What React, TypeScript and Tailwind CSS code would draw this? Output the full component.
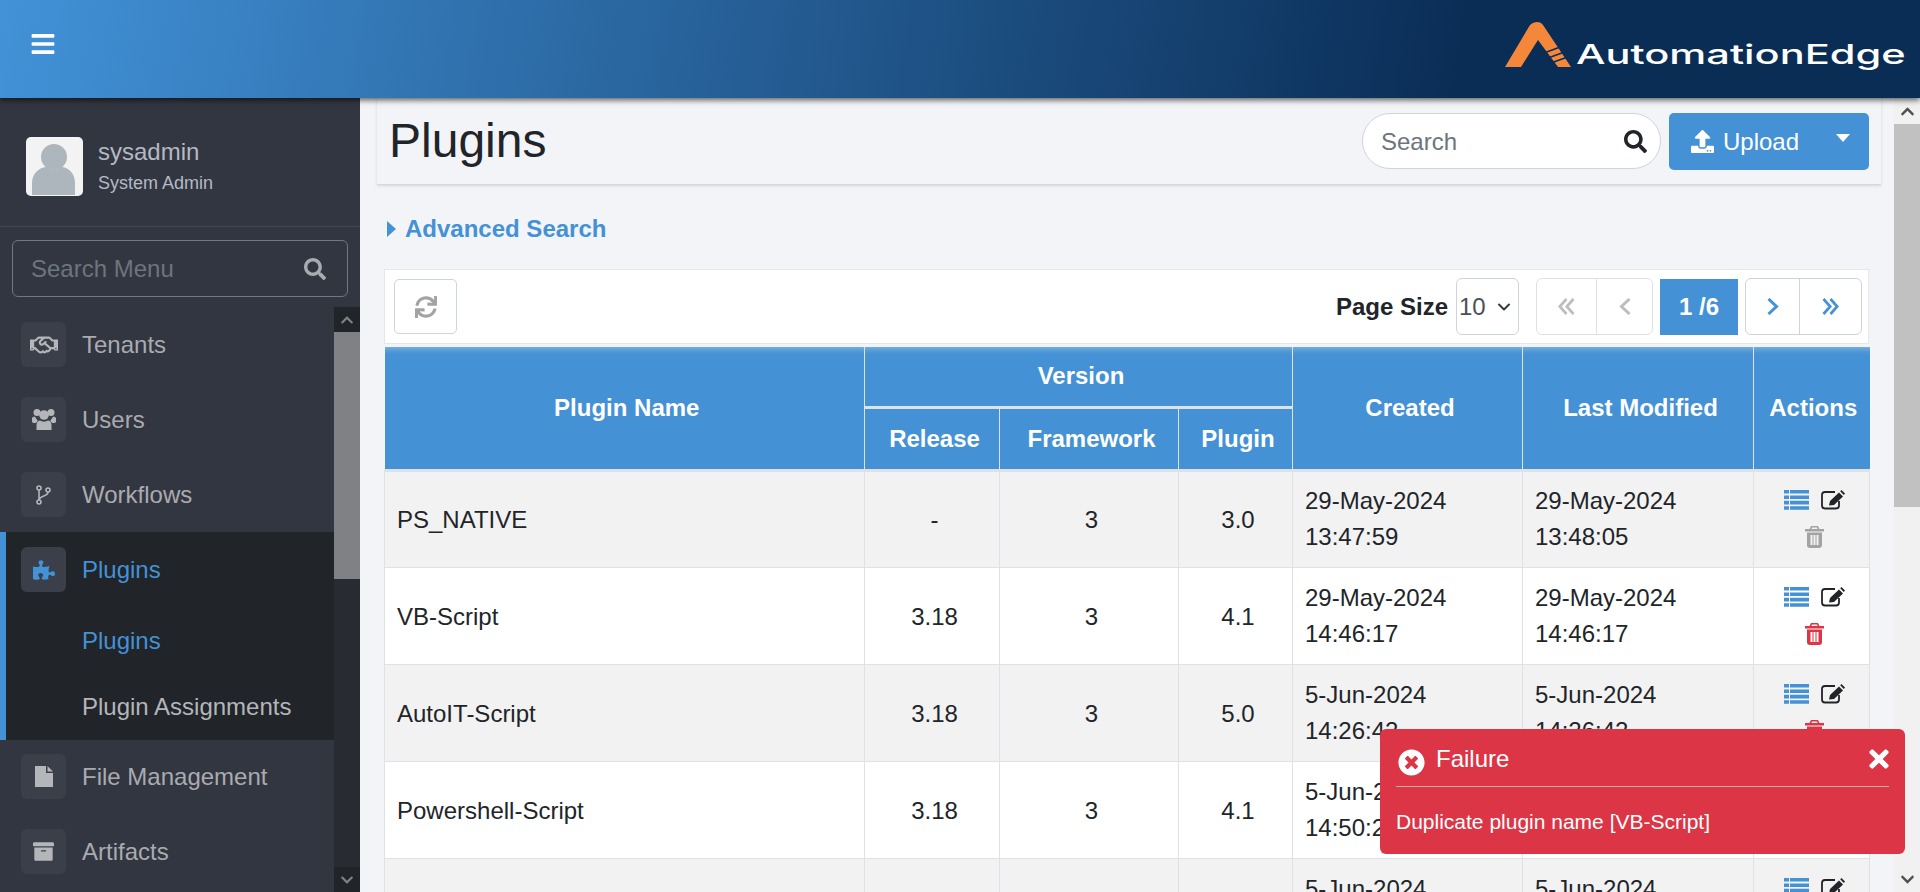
import React from "react";
import {
  FaArchive,
  FaBars,
  FaChevronDown,
  FaChevronUp,
  FaPuzzlePiece,
  FaRegHandshake,
  FaSearch,
  FaSync,
  FaTimes,
  FaTimesCircle,
  FaUpload,
} from "react-icons/fa";

const rows = [
  { name: "PS_NATIVE", release: "-", framework: "3", plugin: "3.0", created: ["29-May-2024", "13:47:59"], modified: ["29-May-2024", "13:48:05"], locked: true },
  { name: "VB-Script", release: "3.18", framework: "3", plugin: "4.1", created: ["29-May-2024", "14:46:17"], modified: ["29-May-2024", "14:46:17"] },
  { name: "AutoIT-Script", release: "3.18", framework: "3", plugin: "5.0", created: ["5-Jun-2024", "14:26:42"], modified: ["5-Jun-2024", "14:26:42"] },
  { name: "Powershell-Script", release: "3.18", framework: "3", plugin: "4.1", created: ["5-Jun-2024", "14:50:21"], modified: ["5-Jun-2024", "14:50:21"] },
  { name: "Python-Script", release: "3.18", framework: "3", plugin: "4.1", created: ["5-Jun-2024", "15:02:10"], modified: ["5-Jun-2024", "15:02:10"] },
];

// the app uses the old font-awesome set, these are closer than the packaged ones
function ListIcon() {
  return (
    <svg viewBox="0 0 25 20" className="h-[20px] w-[25px]" fill="#4491d5">
      <path d="M0 0h5v3.6H0zM6 0h19v3.6H6zM0 5.4h5V9H0zM6 5.4h19V9H6zM0 10.8h5v3.6H0zM6 10.8h19v3.6H6zM0 16.2h5v3.6H0zM6 16.2h19v3.6H6z" />
    </svg>
  );
}

function EditIcon() {
  return (
    <svg viewBox="0 0 24 20" className="h-[20px] w-[24px]" fill="#212529">
      <path d="M14 2H4A3 3 0 0 0 1 5v10.500a3 3 0 0 0 3 3h11a3 3 0 0 0 3-3V11" fill="none" stroke="#212529" strokeWidth="1.800" />
      <path d="M8 15.500L9 11 18 2.500 22 6.500 13 15zM19.200 1.300L20.500 0 24 3.500 22.800 5z" />
    </svg>
  );
}

function TrashIcon({ color }: { color: string }) {
  return (
    <svg viewBox="0 0 19 22" className="h-[22px] w-[19px]" fill={color}>
      <path d="M6 0h7l1.500 3H19v2.400H0V3h4.500zM7 1.500L6.400 3h6.200L12 1.500z" />
      <path d="M2 6.500h15V19a3 3 0 0 1-3 3H5a3 3 0 0 1-3-3zM5.500 9v10H7.500V9zM8.500 9v10h2V9zM11.500 9v10h2V9z" fillRule="evenodd" />
    </svg>
  );
}

function DoubleAngle({ flip }: { flip?: boolean }) {
  return (
    <svg viewBox="0 0 17 17" className={`h-[17px] w-[17px] ${flip ? "rotate-180" : ""}`} fill="none" stroke="currentColor" strokeWidth="2.700">
      <path d="M8.500 1L1.800 8.500 8.500 16M15.500 1L8.800 8.500 15.500 16" />
    </svg>
  );
}

function SingleAngle({ flip }: { flip?: boolean }) {
  return (
    <svg viewBox="0 0 12 17" className={`h-[17px] w-[12px] ${flip ? "rotate-180" : ""}`} fill="none" stroke="currentColor" strokeWidth="3">
      <path d="M10.500 1L2.500 8.500 10.500 16" />
    </svg>
  );
}

function ForkIcon() {
  return (
    <svg viewBox="0 0 15 20" className="h-[20px] w-[15px]" fill="none" stroke="currentColor" strokeWidth="1.600">
      <circle cx="3" cy="3" r="2" />
      <circle cx="3" cy="17" r="2" />
      <circle cx="12" cy="5" r="2" />
      <path d="M3 5v10M12 7c0 5-8 3-9 8" />
    </svg>
  );
}

function UsersIcon() {
  return (
    <svg viewBox="0 0 24 21" className="h-[21px] w-[24px]" fill="currentColor">
      <circle cx="5" cy="3.500" r="3.500" />
      <circle cx="19" cy="3.500" r="3.500" />
      <circle cx="12" cy="6" r="4.800" />
      <path d="M0 9.500C0 8 1.500 7.500 3 7.800L5.800 12 4 14H1.500C.5 14 0 13 0 12zM24 9.500C24 8 22.500 7.500 21 7.800L18.200 12 20 14h2.500c1 0 1.500-1 1.500-2z" />
      <path d="M4.500 21V16c0-2.500 2-4.500 3.500-4.500 2.200 1.500 5.800 1.500 8 0 1.500 0 3.500 2 3.500 4.500v5z" />
    </svg>
  );
}

function FileIcon() {
  return (
    <svg viewBox="0 0 18 21" className="h-[21px] w-[18px]" fill="currentColor">
      <path d="M0 0h11v7h7v14H0zM12.500 0L18 5.500h-5.500z" />
    </svg>
  );
}

function MenuItem({ icon, label, active }: { icon: React.ReactNode; label: string; active?: boolean }) {
  return (
    <div className="flex h-[75px] items-center gap-4">
      <div className={`flex h-[45px] w-[45px] items-center justify-center rounded-md bg-[#3b3f49] ${active ? "text-[#4491d5]" : "text-[#b4b6ba]"}`}>
        {icon}
      </div>
      <span className={active ? "text-[#4491d5]" : "text-[#a9abb0]"}>{label}</span>
    </div>
  );
}

function Sidebar() {
  return (
    <aside className="flex w-[360px] shrink-0 flex-col bg-[#323640]">
      <div className="flex h-[129px] shrink-0 items-center gap-[15px] border-b border-[#41454e] pl-[26px] pt-[8px]">
        <svg viewBox="0 0 57 59" className="h-[59px] w-[57px]">
          <rect width="57" height="59" rx="5" fill="#f3f3f3" />
          <circle cx="28" cy="20" r="13" fill="#adb5bd" />
          <path d="M6 58 V46 C6 36 14 30 21 30 C25 34 31 34 35 30 C42 30 49 36 49 46 V58 Z" fill="#adb5bd" />
        </svg>
        <div>
          <div className="text-[24px] leading-[30px] text-[#b4b9c4]">sysadmin</div>
          <div className="mt-[4px] text-[18px] leading-[24px] text-[#b4b9c4]">System Admin</div>
        </div>
      </div>
      <div className="mx-3 mt-[13px] flex h-[57px] w-[336px] shrink-0 items-center justify-between rounded-md border border-[#73767e] pl-[18px] pr-[21px]">
        <span className="text-[24px] text-[#6c757d]">Search Menu</span>
        <FaSearch className="text-[22px] text-[#a9abb0]" />
      </div>
      <div className="mt-[10px] flex min-h-0 flex-1 overflow-hidden text-[24px]">
        <nav className="w-[334px] shrink-0">
          <div className="pl-[21px]">
            <MenuItem icon={<FaRegHandshake className="text-[28px]" />} label="Tenants" />
            <MenuItem icon={<UsersIcon />} label="Users" />
            <MenuItem icon={<ForkIcon />} label="Workflows" />
          </div>
          <div className="mt-[1px] border-l-[6px] border-[#4491d5] bg-[#212429] pl-[15px]">
            <div className="-mt-[1px]">
              <MenuItem icon={<FaPuzzlePiece className="text-[22px]" />} label="Plugins" active />
            </div>
            <div className="pl-[61px] pt-[1px]">
              <div className="flex h-[66px] items-center text-[#4491d5]">Plugins</div>
              <div className="flex h-[66px] items-center text-[#b4b6ba]">Plugin Assignments</div>
            </div>
          </div>
          <div className="-mt-[1px] pl-[21px]">
            <MenuItem icon={<FileIcon />} label="File Management" />
            <MenuItem icon={<FaArchive className="text-[21px]" />} label="Artifacts" />
          </div>
        </nav>
        <div className="flex w-[26px] shrink-0 flex-col bg-[#282b32]">
          <div className="flex h-[25px] items-center justify-center bg-[#212429] text-[14px] text-[#7f8185]">
            <FaChevronUp />
          </div>
          <div className="h-[247px] bg-[#808185]" />
          <div className="flex-1" />
          <div className="flex h-[25px] items-center justify-center bg-[#212429] text-[14px] text-[#7f8185]">
            <FaChevronDown />
          </div>
        </div>
      </div>
    </aside>
  );
}

function PlainButton({ children, className }: { children: React.ReactNode; className: string }) {
  return <div className={`flex h-[55px] items-center justify-center text-[24px] ${className}`}>{children}</div>;
}

function Toolbar() {
  return (
    <div className="flex h-[75px] items-center justify-between border border-[#e4e6ea] bg-white pl-[9px] pr-[6px]">
      <PlainButton className="w-[63px] rounded-[5px] border border-[#ced4da] text-[#a3a3a3]">
        <FaSync className="text-[22px]" />
      </PlainButton>
      <div className="flex items-center">
        <span className="mr-[8px] text-[24px] font-bold text-[#212529]">Page Size</span>
        <div className="mr-[17px] flex h-[57px] w-[63px] items-center justify-between rounded-md border border-[#ced4da] pl-[2px] pr-[6px] text-[24px] text-[#495057]">
          10
          <svg viewBox="0 0 16 16" className="h-[16px] w-[16px]" fill="none" stroke="#343a40" strokeWidth="2" strokeLinecap="round" strokeLinejoin="round">
            <path d="M3 5.500l5 5 5-5" />
          </svg>
        </div>
        <div className="flex rounded-md border border-[#dee2e6] text-[#bdbdbd]">
          <PlainButton className="w-[60px] border-r border-[#dee2e6]"><DoubleAngle /></PlainButton>
          <PlainButton className="w-[55px]"><SingleAngle /></PlainButton>
        </div>
        <div className="mx-[7px] flex h-[56px] w-[78px] items-center justify-center bg-[#4491d5] text-[24px] font-bold text-white">1 /6</div>
        <div className="flex rounded-md border border-[#ced4da] text-[#4491d5]">
          <PlainButton className="w-[54px] border-r border-[#ced4da]"><SingleAngle flip /></PlainButton>
          <PlainButton className="w-[61px]"><DoubleAngle flip /></PlainButton>
        </div>
      </div>
    </div>
  );
}

function PluginTable() {
  const th = "border-r border-[#dee2e6] pl-[5px] text-center align-middle font-bold text-white shadow-[inset_0_7px_6px_-5px_rgba(255,255,255,0.35)]";
  const sub = "border-r border-[#dee2e6] pl-[5px] font-bold text-white";
  const td = "border-r border-[#dee2e6] px-3 py-0 text-[#212529]";
  const center = "border-r border-[#dee2e6] pl-[5px] pt-[2px] text-center text-[#212529]";
  return (
    <table className="mt-[3px] w-[1485px] table-fixed border-collapse text-[24px] leading-[36px]">
      <colgroup>
        <col className="w-[480px]" />
        <col className="w-[135px]" />
        <col className="w-[179px]" />
        <col className="w-[114px]" />
        <col className="w-[230px]" />
        <col className="w-[231px]" />
        <col className="w-[116px]" />
      </colgroup>
      <thead className="bg-[#4491d5]">
        <tr className="h-[60px]">
          <th rowSpan={2} className={th}>Plugin Name</th>
          <th colSpan={3} className={`${th} border-b-[3px]`}>Version</th>
          <th rowSpan={2} className={th}>Created</th>
          <th rowSpan={2} className={th}>Last Modified</th>
          <th rowSpan={2} className="pl-[3px] text-center align-middle font-bold text-white shadow-[inset_0_7px_6px_-5px_rgba(255,255,255,0.35)]">Actions</th>
        </tr>
        <tr className="h-[63px] border-b-[3px] border-[#dee2e6]">
          <th className={sub}>Release</th>
          <th className={sub}>Framework</th>
          <th className={sub}>Plugin</th>
        </tr>
      </thead>
      <tbody>
        {rows.map((row, i) => (
          <tr key={row.name} className={`h-[97px] border-b border-[#dee2e6] ${i % 2 === 0 ? "bg-[#f2f2f2]" : "bg-white"}`}>
            <td className={`${td} border-l pt-[2px]`}>{row.name}</td>
            <td className={center}>{row.release}</td>
            <td className={center}>{row.framework}</td>
            <td className={center}>{row.plugin}</td>
            <td className={td}>{row.created[0]}<br />{row.created[1]}</td>
            <td className={td}>{row.modified[0]}<br />{row.modified[1]}</td>
            <td className="border-r border-[#dee2e6] pl-[5px]">
              <div className="flex items-center justify-center gap-[12px]">
                <ListIcon />
                <EditIcon />
              </div>
              <div className="mt-[16px] flex justify-center">
                <TrashIcon color={row.locked ? "#a3a3a3" : "#dc3545"} />
              </div>
            </td>
          </tr>
        ))}
      </tbody>
    </table>
  );
}

export default function App() {
  return (
    <div className="relative flex h-[892px] w-full flex-col overflow-hidden bg-[#f2f4f8] font-['Liberation_Sans',Arial,sans-serif]">
      <header className="relative z-10 flex h-[98px] shrink-0 items-center justify-between bg-[linear-gradient(100deg,#4292d8_0%,#0a2d56_76%)] pl-[30px] pr-[15px] shadow-[0_2px_6px_rgba(0,0,0,0.65)]">
        <FaBars className="-mt-[10px] text-[26px] text-white" />
        <div className="-mt-[10px] flex items-end">
          <svg viewBox="0 0 66 45" className="h-[45px] w-[66px]">
            <path d="M0 45 L25 3 Q28 0 32 0 Q36 0 38 3 L66 45 H53 L33 18 L16 45 Z" fill="#f5873a" />
            <path d="M39 31 L58 24 M43 36 L61 29.500 M46 41 L64 34.500" stroke="#0a2d56" strokeWidth="1.700" />
          </svg>
          <div className="w-[334px]">
            <span className="ml-[5px] inline-block origin-left translate-y-[5px] scale-x-[1.54] font-['Inter',sans-serif] text-[27px] font-medium leading-[34px] text-white">AutomationEdge</span>
          </div>
        </div>
      </header>

      <div className="flex min-h-0 flex-1">
        <Sidebar />
        <main className="min-w-0 flex-1 overflow-hidden pl-[17px] pr-[13px]">
          <div className="flex h-[87px] items-center justify-between border-b border-[#d5d8de] pl-3 pr-3 shadow-[0_1px_3px_rgba(0,0,0,0.12)]">
            <h1 className="text-[48px] leading-[58px] text-[#212529]">Plugins</h1>
            <div className="flex items-center gap-[8px]">
              <div className="flex h-[56px] w-[299px] items-center justify-between rounded-full border border-[#ced4da] bg-white pl-[18px] pr-[13px]">
                <span className="pt-[2px] text-[24px] text-[#6c757d]">Search</span>
                <FaSearch className="text-[23px] text-[#212529]" />
              </div>
              <div className="flex h-[57px] w-[200px] items-center rounded-[5px] bg-[#4491d5] pl-[22px] text-[24px] text-white">
                <FaUpload className="mr-[9px] text-[23px]" />
                <span className="pt-[2px]">Upload</span>
                <svg viewBox="0 0 14 8" className="ml-[37px] mt-[-6px] h-[8px] w-[14px]" fill="currentColor">
                  <path d="M0 0h14L7 8z" />
                </svg>
              </div>
            </div>
          </div>
          <div className="ml-[7px] mr-[12px]">
            <div className="flex h-[84px] items-center pl-[3px] pt-[3px] text-[24px] font-bold text-[#4491d5]">
              <svg viewBox="0 0 9 16" className="mr-[9px] h-[16px] w-[9px]" fill="currentColor">
                <path d="M0 0l9 8-9 8z" />
              </svg>
              Advanced Search
            </div>
            <Toolbar />
            <PluginTable />
          </div>
        </main>
        <div className="flex w-[26px] shrink-0 flex-col bg-[#f1f1f1]">
          <div className="flex h-[26px] items-center justify-center text-[15px] text-[#505050]">
            <FaChevronUp />
          </div>
          <div className="h-[383px] bg-[#c1c1c1]" />
          <div className="flex-1" />
          <div className="flex h-[26px] items-center justify-center text-[15px] text-[#505050]">
            <FaChevronDown />
          </div>
        </div>
      </div>

      <div className="absolute left-[1380px] top-[729px] z-20 h-[125px] w-[525px] rounded-md bg-[#dc3545] px-4 text-white">
        <div className="flex h-[58px] items-center border-b border-[#eda4ab] pt-[3px]">
          <FaTimesCircle className="ml-[2px] mt-[6px] text-[27px]" />
          <span className="ml-[11px] text-[24px]">Failure</span>
          <FaTimes className="-mr-[4px] ml-auto text-[28px]" />
        </div>
        <div className="mt-[21px] text-[21px] leading-[28px]">Duplicate plugin name [VB-Script]</div>
      </div>
    </div>
  );
}
